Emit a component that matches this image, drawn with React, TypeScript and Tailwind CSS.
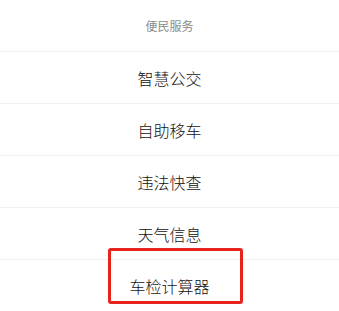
const ITEMS = ["智慧公交", "自助移车", "违法快查", "天气信息"];

export default function App() {
  return (
    <div
      className="w-[339px] h-[311px] overflow-hidden bg-white"
      style={{ fontFamily: '"Noto Sans CJK SC", "Noto Sans", sans-serif' }}
    >
      {/* Header */}
      <div className="h-[52px] flex items-center justify-center border-b border-[#f0f0f0]">
        <span className="text-[12px] text-[#8a8a8a]">便民服务</span>
      </div>

      {ITEMS.map((label) => (
        <div
          key={label}
          className="h-[52px] flex items-center justify-center border-b border-[#f0f0f0]"
        >
          <span className="text-[16px] font-light text-[#111111]">{label}</span>
        </div>
      ))}

      {/* Last row with highlight */}
      <div className="relative h-[52px] flex items-center justify-center">
        <span className="text-[16px] font-light text-[#111111]">车检计算器</span>
        <div className="absolute left-[108px] top-[-12px] w-[135px] h-[56px] border-[3px] border-[#e8231c] rounded-[3px]" />
      </div>
    </div>
  );
}
